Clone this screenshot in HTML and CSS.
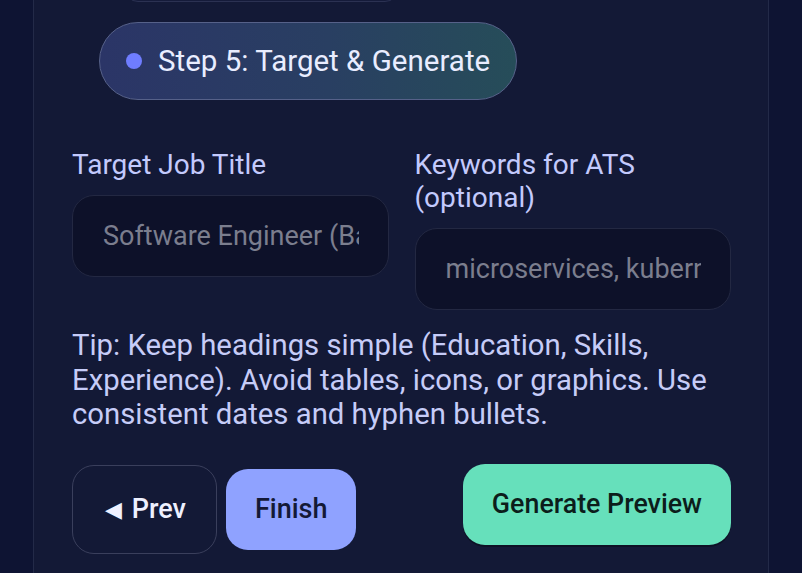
FILE: index.html
```html
<!DOCTYPE html>
<html lang="en">
<head>
    <meta charset="UTF-8">
    <meta name="viewport" content="width=device-width, initial-scale=1.0">
    <title>Resume Builder - Step 5</title>
    <link rel="stylesheet" href="styles.css">
</head>
<body>
    <div class="card">
        <div class="prev-stub"></div>

        <div class="step-pill">
            <span class="step-dot"></span>
            <span class="step-title">Step 5: Target &amp; Generate</span>
        </div>

        <div class="fields">
            <div class="field">
                <label for="job-title">Target Job Title</label>
                <input id="job-title" type="text" placeholder="Software Engineer (Backend)">
            </div>
            <div class="field">
                <label for="keywords">Keywords for ATS (optional)</label>
                <input id="keywords" type="text" placeholder="microservices, kubernetes, AWS">
            </div>
        </div>

        <p class="tip">Tip: Keep headings simple (Education, Skills, Experience). Avoid tables, icons, or graphics. Use consistent dates and hyphen bullets.</p>

        <div class="actions">
            <div class="nav-buttons">
                <button class="btn btn-prev"><span class="arrow">&#9664;</span> Prev</button>
                <button class="btn btn-finish">Finish</button>
            </div>
            <button class="btn btn-generate">Generate Preview</button>
        </div>
    </div>
</body>
</html>
```

FILE: styles.css
```css
html, body {
    height: 100%;
}
body {
    margin: 0;
    padding-left: 33px;
    background: #0e1433;
    font-family: Roboto, "Noto Sans", sans-serif;
    color: #c5cbfa;
    overflow: hidden;
}
.card {
    box-sizing: border-box;
    width: 736px;
    min-height: 640px;
    margin-top: -40px;
    padding: 0 37px 0 38px;
    background: #131936;
    border-left: 1px solid #232a48;
    border-right: 1px solid #232a48;
}
.prev-stub {
    box-sizing: border-box;
    width: 275px;
    height: 42px;
    margin-left: 52px;
    border: 1px solid #2b3152;
    border-radius: 14px;
    background: #151b3a;
}
.step-pill {
    display: inline-flex;
    align-items: center;
    gap: 16px;
    box-sizing: border-box;
    height: 78px;
    margin: 20px 0 0 27px;
    padding: 0 26px;
    border: 1px solid #566189;
    border-radius: 40px;
    background: linear-gradient(90deg, #2b3567 0%, #293f62 55%, #264d59 100%);
}
.step-dot {
    width: 16px;
    height: 16px;
    border-radius: 50%;
    background: #6f7dff;
}
.step-title {
    font-size: 29.5px;
    color: #e9edff;
}
.fields {
    display: grid;
    grid-template-columns: 1fr 1fr;
    gap: 26px;
    margin-top: 48px;
}
.field {
    display: flex;
    flex-direction: column;
    align-items: stretch;
    gap: 14px;
}
.field label {
    font-size: 28px;
    line-height: 33px;
    color: #c3cafd;
}
.field input {
    box-sizing: border-box;
    width: 100%;
    height: 82px;
    padding: 0 29px 0 30px;
    background: #0d1129;
    border: 1px solid #232842;
    border-radius: 22px;
    font-family: inherit;
    font-size: 27px;
    color: #e6e8f5;
    outline: none;
}
.field input::placeholder {
    color: #7b7e8e;
}
.tip {
    margin: 18px 0 0;
    font-size: 29.3px;
    line-height: 34.5px;
    color: #c6ccf8;
}
.actions {
    display: flex;
    justify-content: space-between;
    align-items: flex-start;
    margin-top: 33px;
}
.nav-buttons {
    display: flex;
    align-items: center;
    gap: 9px;
}
.btn {
    font-family: inherit;
    font-size: 27px;
    font-weight: 500;
    line-height: 32px;
    padding: 24px 30px;
    border: none;
    border-radius: 22px;
    cursor: pointer;
}
.btn-prev {
    padding: 27px 30px 27px 32px;
    background: transparent;
    border: 1px solid #3a3f5c;
    color: #eef0ff;
}
.btn-prev .arrow {
    font-size: 22px;
    margin-right: 3px;
    vertical-align: 1px;
}
.btn-finish {
    padding: 24px 29px 25px;
    background: #8fa2ff;
    color: #141936;
}
.btn-generate {
    margin-top: -1px;
    padding: 24px 29px 25px;
    font-size: 26.8px;
    background: #66e0bb;
    color: #0c1d1b;
    box-shadow: 0 2px 0 rgba(0, 0, 0, 0.3);
}
```
